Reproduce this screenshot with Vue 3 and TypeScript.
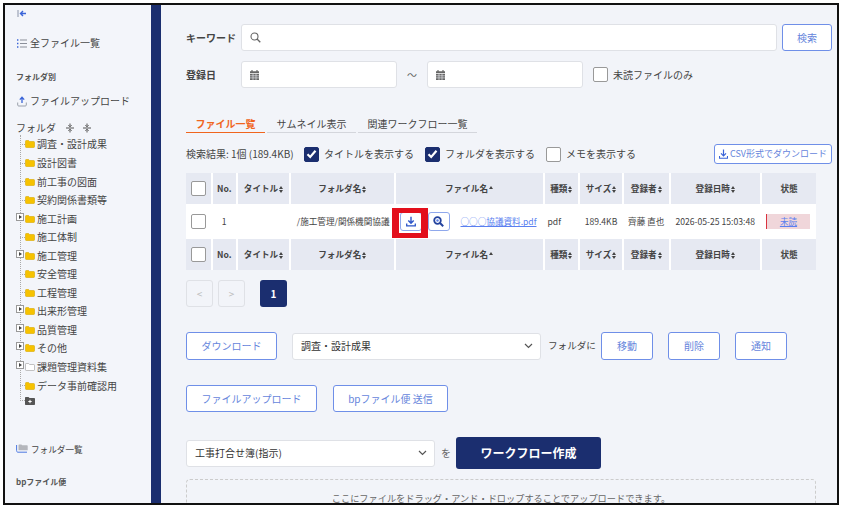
<template>
  <div class="frame">
    <aside class="sidebar">
      <svg class="collapse" width="10" height="9" viewBox="0 0 10 9">
        <path d="M1 1v7" stroke="#8a93a8" stroke-width="1" fill="none" />
        <path d="M9 4.5H3.5M6 2 3.5 4.5 6 7" stroke="#3a64d8" stroke-width="1.4" fill="none" />
      </svg>
      <div class="side-link all-files">
        <svg width="10" height="9" viewBox="0 0 10 9">
          <path d="M3 1h7M3 4.5h7M3 8h7" stroke="#8a8f99" stroke-width="1" fill="none" />
          <path d="M0 1h1.4M0 4.5h1.4M0 8h1.4" stroke="#3a64d8" stroke-width="1.4" fill="none" />
        </svg>
        <span>全ファイル一覧</span>
      </div>
      <div class="side-title by-folder">フォルダ別</div>
      <div class="side-link upload">
        <svg width="10" height="11" viewBox="0 0 10 11">
          <path d="M5 7V1.5M2.8 3.6 5 1.3l2.2 2.3" stroke="#3a64d8" stroke-width="1.3" fill="none" />
          <path d="M.7 6.5V9c0 .7.4 1 1 1h6.6c.6 0 1-.3 1-1V6.5" stroke="#9aa0ab" stroke-width="1" fill="none" />
        </svg>
        <span>ファイルアップロード</span>
      </div>
      <div class="folder-head">
        <span>フォルダ</span>
        <svg v-for="n in 2" :key="n" width="8" height="10" viewBox="0 0 8 10">
          <path d="M0 5h8" stroke="#555" stroke-width="1" />
          <path d="M4 .5v3M2.4 2.2 4 3.8l1.6-1.6M4 9.500v-3M2.400 7.800 4 6.200l1.600 1.600" stroke="#555" stroke-width="1" fill="none" />
        </svg>
      </div>
      <ul class="tree">
        <li v-for="item in folders" :key="item.name" class="tree-row">
          <span class="toggle-slot">
            <span v-if="item.toggle" class="toggle"></span>
            <span v-else class="dash"></span>
          </span>
          <svg width="10" height="8" viewBox="0 0 10 8" class="folder-ico">
            <path
              d="M.5 1.200C.5.700.8.500 1.200.500h2.400l1 1h4.200c.4 0 .7.300.7.700v4.600c0 .4-.3.700-.7.700H1.200c-.4 0-.7-.3-.7-.7z"
              :fill="item.empty ? '#fff' : '#f6c200'"
              :stroke="item.empty ? '#9a9a9a' : '#d9a900'"
              stroke-width=".6"
            />
          </svg>
          <span class="tree-name">{{ item.name }}</span>
        </li>
        <li class="tree-row add-row">
          <span class="toggle-slot"><span class="dash"></span></span>
          <svg width="10" height="8" viewBox="0 0 10 8">
            <path d="M0 1c0-.6.3-1 1-1h2.500l1 1H9c.6 0 1 .4 1 1v5c0 .6-.4 1-1 1H1c-.7 0-1-.4-1-1z" fill="#555" />
            <path d="M5 2.800v3.400M3.300 4.500h3.400" stroke="#fff" stroke-width="1" />
          </svg>
        </li>
      </ul>
      <div class="side-link folder-list">
        <svg width="12" height="9" viewBox="0 0 12 9">
          <path d="M.6 1v5.600c0 1 .5 1.600 1.400 1.600h9" stroke="#4c78e0" stroke-width="1" fill="none" />
          <path d="M2.500 1c0-.4.200-.6.600-.6h2.300l.8.900h4.900c.4 0 .6.200.6.600v4.400H2.500z" fill="#b4b6bc" />
        </svg>
        <span>フォルダ一覧</span>
      </div>
      <div class="side-title bp">bpファイル便</div>
    </aside>

    <div class="divider"></div>

    <main class="main">
      <div class="form-row">
        <label class="field-label">キーワード</label>
        <div class="input keyword">
          <svg width="11" height="11" viewBox="0 0 11 11">
            <circle cx="4.500" cy="4.500" r="3.500" fill="none" stroke="#666" stroke-width="1.100" />
            <path d="m7 7 3.300 3.300" stroke="#666" stroke-width="1.300" />
          </svg>
        </div>
        <button class="btn search-btn">検索</button>
      </div>
      <div class="form-row date-row">
        <label class="field-label">登録日</label>
        <div class="input date">
          <svg width="9" height="10" viewBox="0 0 9 10">
            <path d="M2 0v2M7 0v2" stroke="#666" stroke-width="1.200" />
            <path d="M0 1.300h9V3H0zM0 3.700h9V10H0z" fill="#666" />
            <path d="M3 3.700V10M6 3.700V10M0 5.800h9M0 7.900h9" stroke="#f2f4f9" stroke-width=".6" />
          </svg>
        </div>
        <span class="tilde">～</span>
        <div class="input date">
          <svg width="9" height="10" viewBox="0 0 9 10">
            <path d="M2 0v2M7 0v2" stroke="#666" stroke-width="1.200" />
            <path d="M0 1.300h9V3H0zM0 3.700h9V10H0z" fill="#666" />
            <path d="M3 3.700V10M6 3.700V10M0 5.800h9M0 7.900h9" stroke="#f2f4f9" stroke-width=".6" />
          </svg>
        </div>
        <label class="check unread"><span class="box"></span>未読ファイルのみ</label>
      </div>

      <div class="tabs">
        <span class="tab active">ファイル一覧</span>
        <span class="tab t2">サムネイル表示</span>
        <span class="tab t3">関連ワークフロー一覧</span>
      </div>

      <div class="result-row">
        <span class="result">検索結果: 1個 (189.4KB)</span>
        <label v-for="c in displayChecks" :key="c.label" class="check">
          <span class="box" :class="{ on: c.on }">
            <svg v-if="c.on" width="11" height="10" viewBox="0 0 11 10">
              <path d="M1.500 5.300 4.200 8 9.500 1.800" stroke="#fff" stroke-width="2.200" fill="none" />
            </svg>
          </span>
          {{ c.label }}
        </label>
        <button class="btn csv-btn">
          <svg width="9" height="10" viewBox="0 0 9 10">
            <path d="M4.500 .5v6M2 4.300l2.500 2.500L7 4.300" stroke="#3a64d8" stroke-width="1.200" fill="none" />
            <path d="M.5 7v2.300h8V7" stroke="#3a64d8" stroke-width="1.100" fill="none" />
          </svg>
          CSV形式でダウンロード
        </button>
      </div>

      <table class="files">
        <colgroup>
          <col v-for="c in columns" :key="c.key" :style="{ width: c.width + 'px' }" />
        </colgroup>
        <thead>
          <tr>
            <th v-for="c in columns" :key="c.key">
              <span v-if="c.key === 'check'" class="box head-box"></span>
              <template v-else>{{ c.label }}<i v-if="c.sort" class="sort" :class="c.sort"></i></template>
            </th>
          </tr>
        </thead>
        <tbody>
          <tr>
            <td class="center"><span class="box row-box"></span></td>
            <td class="center">1</td>
            <td></td>
            <td class="folder-cell">/施工管理/関係機関協議</td>
            <td>
              <div class="file-cell">
                <button class="mini-btn">
                  <svg width="10" height="11" viewBox="0 0 10 11">
                    <path d="M5 .7v6.500M2.300 4.600 5 7.300l2.700-2.700" stroke="#2d55c8" stroke-width="1.400" fill="none" />
                    <path d="M.7 7.600v2.200h8.600V7.600" stroke="#2d55c8" stroke-width="1.300" fill="none" />
                  </svg>
                </button>
                <button class="mini-btn">
                  <svg width="11" height="11" viewBox="0 0 11 11">
                    <circle cx="4.500" cy="4.500" r="3.300" fill="none" stroke="#24439e" stroke-width="1.800" />
                    <circle cx="4.500" cy="4.500" r="1.200" fill="#5d80e6" />
                    <path d="m7 7 3.200 3.200" stroke="#24439e" stroke-width="2" />
                  </svg>
                </button>
                <a class="file-link">○○○協議資料.pdf</a>
                <span class="highlight"></span>
              </div>
            </td>
            <td class="type-cell">pdf</td>
            <td class="center">189.4KB</td>
            <td class="center">齊藤 直也</td>
            <td class="center">2026-05-25 15:03:48</td>
            <td class="status-cell"><a class="unread-badge">未読</a></td>
          </tr>
        </tbody>
        <tfoot>
          <tr>
            <th v-for="c in columns" :key="c.key">
              <span v-if="c.key === 'check'" class="box head-box"></span>
              <template v-else>{{ c.label }}<i v-if="c.sort" class="sort" :class="c.sort"></i></template>
            </th>
          </tr>
        </tfoot>
      </table>

      <div class="pager">
        <span class="page off">&lt;</span>
        <span class="page off">&gt;</span>
        <span class="page current">1</span>
      </div>

      <div class="action-row move-row">
        <button class="btn dl-btn">ダウンロード</button>
        <div class="select move-select">
          <span>調査・設計成果</span>
          <svg width="9" height="6" viewBox="0 0 9 6"><path d="m1 1 3.500 3.500L8 1" stroke="#555" stroke-width="1.200" fill="none" /></svg>
        </div>
        <span class="to-folder">フォルダに</span>
        <button class="btn small-btn first">移動</button>
        <button class="btn small-btn">削除</button>
        <button class="btn small-btn">通知</button>
      </div>

      <div class="action-row upload-row">
        <button class="btn up-btn">ファイルアップロード</button>
        <button class="btn bp-btn">bpファイル便 送信</button>
      </div>

      <div class="action-row wf-row">
        <div class="select wf-select">
          <span>工事打合せ簿(指示)</span>
          <svg width="9" height="6" viewBox="0 0 9 6"><path d="m1 1 3.500 3.500L8 1" stroke="#555" stroke-width="1.200" fill="none" /></svg>
        </div>
        <span class="wo">を</span>
        <button class="wf-btn">ワークフロー作成</button>
      </div>

      <div class="dropzone">ここにファイルをドラッグ・アンド・ドロップすることでアップロードできます。</div>
    </main>
  </div>
</template>

<script setup lang="ts">
interface Folder {
  name: string
  toggle?: boolean
  empty?: boolean
}

interface Column {
  key: string
  label: string
  width: number
  sort?: 'both' | 'asc'
}

const folders: Folder[] = [
  { name: '調査・設計成果' },
  { name: '設計図書' },
  { name: '前工事の図面' },
  { name: '契約関係書類等' },
  { name: '施工計画', toggle: true },
  { name: '施工体制' },
  { name: '施工管理', toggle: true },
  { name: '安全管理' },
  { name: '工程管理' },
  { name: '出来形管理', toggle: true },
  { name: '品質管理', toggle: true },
  { name: 'その他', toggle: true },
  { name: '課題管理資料集', toggle: true, empty: true },
  { name: 'データ事前確認用' }
]

const displayChecks = [
  { label: 'タイトルを表示する', on: true },
  { label: 'フォルダを表示する', on: true },
  { label: 'メモを表示する', on: false }
]

const columns: Column[] = [
  { key: 'check', label: '', width: 25.5 },
  { key: 'no', label: 'No.', width: 25.5 },
  { key: 'title', label: 'タイトル', width: 53, sort: 'both' },
  { key: 'folder', label: 'フォルダ名', width: 104.5, sort: 'both' },
  { key: 'file', label: 'ファイル名', width: 149, sort: 'asc' },
  { key: 'type', label: '種類', width: 35.5, sort: 'both' },
  { key: 'size', label: 'サイズ', width: 44, sort: 'both' },
  { key: 'user', label: '登録者', width: 46.5, sort: 'both' },
  { key: 'date', label: '登録日時', width: 91.5, sort: 'both' },
  { key: 'state', label: '状態', width: 55 }
]
</script>

<style>
html,
body {
  margin: 0;
  background: #fff;
}
</style>

<style scoped>
.frame {
  box-sizing: border-box;
  width: 836px;
  height: 502px;
  margin: 3px 0 0 3px;
  border: 2px solid #111;
  display: flex;
  overflow: hidden;
  background: #f2f4f9;
  color: #444;
  font-family: "Noto Sans CJK JP", "Noto Sans", sans-serif;
  font-size: 10px;
  line-height: 1.4;
}

.sidebar {
  width: 146px;
  flex: none;
  padding-left: 11px;
  box-sizing: border-box;
  background: #f3f5fa;
}

.divider {
  width: 10px;
  flex: none;
  background: #1b2e6f;
}

.collapse {
  display: block;
  margin: 4px 0 0 1px;
}

.side-link {
  display: flex;
  align-items: center;
  gap: 3px;
  font-size: 10px;
}

.side-link svg {
  flex: none;
  margin-left: 1px;
}

.all-files {
  margin-top: 18px;
}

.side-title {
  font-size: 8px;
  font-weight: 700;
  color: #555;
}

.by-folder {
  margin-top: 21px;
}

.upload {
  margin-top: 12px;
}

.folder-head {
  display: flex;
  align-items: center;
  margin-top: 13px;
  font-size: 10px;
}

.folder-head svg {
  margin-left: 9px;
}

.folder-head span {
  margin-right: 1px;
}

.tree {
  position: relative;
  list-style: none;
  margin: 0;
  padding: 0;
}

.tree::before {
  content: "";
  position: absolute;
  left: 4px;
  top: 0;
  bottom: 8px;
  border-left: 1px dotted #aaa;
}

.tree-row {
  display: flex;
  align-items: center;
  height: 18.55px;
  position: relative;
}

.toggle-slot {
  width: 9px;
  flex: none;
  display: flex;
  align-items: center;
}

.toggle {
  box-sizing: border-box;
  width: 8px;
  height: 8px;
  margin-top: -4px;
  border: 1px solid #999;
  background: #fff;
  position: relative;
}

.toggle::after {
  content: "";
  position: absolute;
  left: 2px;
  top: 1px;
  border-left: 3px solid #444;
  border-top: 2px solid transparent;
  border-bottom: 2px solid transparent;
}

.dash {
  display: block;
  margin-left: 4px;
  width: 5px;
  border-top: 1px dotted #aaa;
}

.tree-name {
  margin-left: 2px;
  white-space: nowrap;
}

.folder-ico {
  flex: none;
}

.add-row {
  height: 12px;
}

.folder-list {
  margin-top: 36px;
  font-size: 8.6px;
  gap: 3px;
}

.folder-list svg {
  margin-left: 0;
}

.bp {
  margin-top: 21px;
}

.main {
  flex: 1;
  min-width: 0;
  padding: 19px 5px 0 25px;
  box-sizing: border-box;
}

.form-row {
  display: flex;
  align-items: center;
  height: 27px;
}

.date-row {
  margin-top: 10px;
}

.field-label {
  width: 55px;
  font-weight: 700;
  flex: none;
}

.input {
  box-sizing: border-box;
  height: 27px;
  background: #fff;
  border: 1px solid #dfe1e6;
  border-radius: 3px;
  display: flex;
  align-items: center;
  padding-left: 8px;
}

.keyword {
  flex: 1;
}

.date {
  width: 156px;
}

.tilde {
  width: 30px;
  text-align: center;
  color: #666;
}

.btn {
  box-sizing: border-box;
  height: 27px;
  background: #fff;
  border: 1px solid #6f8fe8;
  border-radius: 3px;
  color: #6685dc;
  font: inherit;
  padding: 0;
  flex: none;
}

.search-btn {
  width: 50px;
  margin-left: 5px;
}

.check {
  display: flex;
  align-items: center;
  gap: 5px;
}

.box {
  box-sizing: border-box;
  display: inline-flex;
  align-items: center;
  justify-content: center;
  width: 15px;
  height: 15px;
  flex: none;
  background: #fff;
  border: 1px solid #999;
  border-radius: 2px;
}

.box.on {
  background: #1b2e6f;
  border-color: #1b2e6f;
}

.unread {
  margin-left: 10px;
}

.tabs {
  display: flex;
  gap: 2px;
  margin-top: 28px;
  height: 17px;
}

.tab {
  box-sizing: border-box;
  text-align: center;
  height: 17px;
  line-height: 15px;
  border-bottom: 1px solid #d4d6dc;
}

.active {
  width: 79px;
  color: #f0651e;
  font-weight: 700;
  border-bottom-color: #f0651e;
}

.t2 {
  width: 89px;
}

.t3 {
  width: 119px;
}

.result-row {
  display: flex;
  align-items: center;
  height: 20px;
  margin-top: 11px;
}

.result {
  width: 118px;
  flex: none;
}

.result-row .check {
  margin-right: 11px;
}

.csv-btn {
  width: 118px;
  height: 20px;
  margin-left: auto;
  display: flex;
  align-items: center;
  justify-content: center;
  gap: 2px;
  font-size: 9px;
}

.files {
  table-layout: fixed;
  border-collapse: collapse;
  width: 630px;
  margin-top: 9px;
  font-size: 8.6px;
}

.files th {
  height: 31px;
  padding: 0;
  background: #e6e9f2;
  color: #444;
  font-weight: 700;
  text-align: center;
  white-space: nowrap;
  border-left: 2px solid #fff;
}

.files th:first-child {
  border-left: 0;
}

.head-box {
  vertical-align: middle;
}

.files td {
  height: 35px;
  padding: 0;
  background: #fff;
  white-space: nowrap;
}

.center {
  text-align: center;
}

.sort {
  display: inline-block;
  width: 4px;
  height: 7px;
  margin-left: 1px;
  vertical-align: -1px;
  position: relative;
}

.sort::before,
.sort::after {
  content: "";
  position: absolute;
  left: 0;
  border-left: 2px solid transparent;
  border-right: 2px solid transparent;
}

.sort.both::before,
.sort.asc::before {
  top: 0;
  border-bottom: 3px solid #444;
}

.sort.both::after {
  bottom: 0;
  border-top: 3px solid #444;
}

.row-box {
  vertical-align: middle;
}

.folder-cell {
  text-align: right;
  padding-right: 5px !important;
}

.file-cell {
  position: relative;
  display: flex;
  align-items: center;
  padding-left: 5px;
}

.mini-btn {
  box-sizing: border-box;
  width: 22px;
  height: 19px;
  margin-right: 6px;
  padding: 0;
  display: flex;
  align-items: center;
  justify-content: center;
  background: #fff;
  border: 1px solid #8fa8ec;
  border-radius: 3px;
}

.file-link {
  margin-left: 5px;
  color: #5b7ff0;
  text-decoration: underline;
}

.highlight {
  position: absolute;
  left: -3px;
  top: -4px;
  width: 36px;
  height: 30px;
  box-sizing: border-box;
  border: solid #e30f1c;
  border-width: 5px 7px 5px 7px;
}

.type-cell {
  padding-left: 4px !important;
}

.status-cell {
  padding-left: 5px !important;
}

.unread-badge {
  display: block;
  box-sizing: border-box;
  width: 44px;
  height: 15px;
  line-height: 15px;
  text-align: center;
  background: #f0d6da;
  border-left: 1px solid #d9333f;
  color: #5b7ff0;
  text-decoration: underline;
}

.pager {
  display: flex;
  margin-top: 10px;
  gap: 5px;
}

.page {
  box-sizing: border-box;
  width: 27px;
  height: 27px;
  display: flex;
  align-items: center;
  justify-content: center;
  border-radius: 3px;
}

.off {
  border: 1px solid #dfe1e6;
  color: #bbb;
}

.current {
  margin-left: 10px;
  background: #1b2e6f;
  color: #fff;
  font-weight: 700;
}

.action-row {
  display: flex;
  align-items: center;
}

.move-row {
  margin-top: 25px;
  height: 28px;
}

.move-row .btn {
  height: 28px;
}

.dl-btn {
  width: 91px;
}

.select {
  box-sizing: border-box;
  height: 27px;
  width: 249px;
  display: flex;
  align-items: center;
  justify-content: space-between;
  padding: 0 7px 0 8px;
  background: #fff;
  border: 1px solid #dfe1e6;
  border-radius: 3px;
  color: #333;
}

.move-select {
  margin-left: 15px;
}

.to-folder {
  margin-left: 7px;
  width: 53px;
  flex: none;
  font-size: 9.6px;
}

.small-btn {
  width: 52px;
  margin-left: 15px;
}

.small-btn.first {
  margin-left: 0;
}

.upload-row {
  margin-top: 25px;
  gap: 16px;
}

.up-btn {
  width: 131px;
}

.bp-btn {
  width: 115px;
}

.wf-row {
  margin-top: 25px;
  height: 32px;
}

.wo {
  margin-left: 6px;
  width: 15px;
  color: #666;
}

.wf-btn {
  width: 145px;
  height: 32px;
  border: 0;
  border-radius: 3px;
  background: #1b2e6f;
  color: #fff;
  font: inherit;
  font-size: 12px;
  font-weight: 700;
  padding: 0;
}

.dropzone {
  margin-top: 10px;
  width: 630px;
  height: 60px;
  box-sizing: border-box;
  padding-top: 12px;
  border: 1px dashed #ccc;
  border-radius: 4px;
  text-align: center;
  font-size: 9.2px;
  color: #666;
}
</style>
